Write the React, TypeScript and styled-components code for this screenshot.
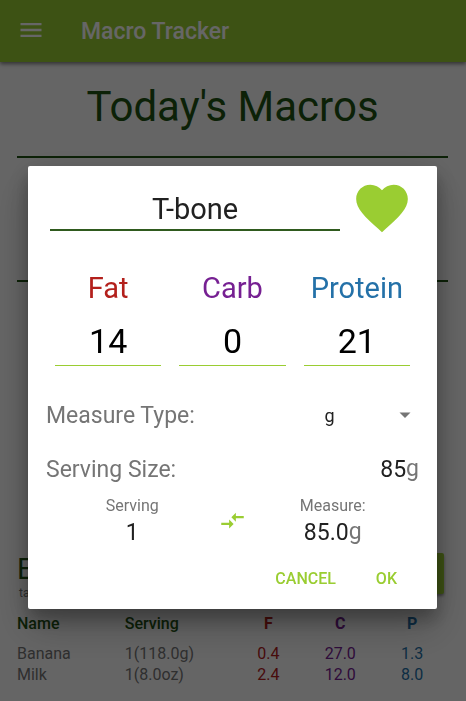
import React from "react";
import styled, { createGlobalStyle } from "styled-components";

const GlobalStyle = createGlobalStyle`
  *, *::before, *::after { box-sizing: border-box; }
  body { margin: 0; background: #fdfdfd; font-family: Roboto, "Liberation Sans", sans-serif; }
  button, input, select { font-family: inherit; }
`;

const GREEN = "#9acd32";
const FOREST = "#1f5413";
const FAT = "#b3201c";
const CARB = "#762092";
const PROTEIN = "#2471a8";

/* ---------- Page behind the dialog ---------- */

const Page = styled.div`
  min-height: 100vh;
  display: flex;
  flex-direction: column;
`;

const AppBar = styled.header`
  display: flex;
  align-items: center;
  gap: 36px;
  height: 62px;
  padding: 0 17px;
  background: ${GREEN};
  box-shadow: 0 2px 4px rgba(0, 0, 0, 0.5);
`;

const MenuButton = styled.button`
  display: flex;
  padding: 0 0 2px;
  border: 0;
  background: none;
  color: #fff;
`;

const AppName = styled.span`
  padding-top: 2px;
  font-size: 23px;
  font-weight: 500;
  line-height: 28px;
  color: #fff;
`;

const Content = styled.main`
  padding: 17px 18px 16px 17px;
`;

const PageTitle = styled.h1`
  margin: 0;
  font-size: 42px;
  font-weight: 400;
  line-height: 56px;
  text-align: center;
  color: ${FOREST};
`;

const Summary = styled.section`
  height: 126px;
  margin-top: 21px;
  border-top: 2px solid ${FOREST};
  border-bottom: 2px solid ${FOREST};
`;

const EntriesHeader = styled.div`
  display: flex;
  justify-content: space-between;
  align-items: flex-start;
  margin-top: 271px;
  padding-right: 4px;
`;

const EntriesTitle = styled.h2`
  margin: 0;
  font-size: 29px;
  font-weight: 400;
  line-height: 32px;
  color: ${FOREST};
`;

const EntriesHint = styled.p`
  margin: 0 2px;
  font-size: 12px;
  line-height: 16px;
  color: #757575;
`;

const AddButton = styled.button`
  width: 96px;
  height: 41px;
  border: 0;
  border-radius: 2px;
  background: ${GREEN};
  box-shadow: 0 2px 3px rgba(0, 0, 0, 0.4);
`;

const EntriesTable = styled.table`
  width: 100%;
  margin-top: 12px;
  table-layout: fixed;
  border-collapse: collapse;
  font-size: 16px;
  line-height: 21px;
  color: #757575;
`;

const HeadCell = styled.th<{ $wide?: boolean; $color?: string }>`
  width: ${(p) => (p.$wide ? "25%" : "auto")};
  padding: 0 0 9px;
  font-weight: ${(p) => (p.$wide ? 500 : 700)};
  text-align: ${(p) => (p.$wide ? "left" : "center")};
  color: ${(p) => p.$color ?? FOREST};
`;

const Cell = styled.td<{ $color?: string }>`
  padding: 0;
  text-align: ${(p) => (p.$color ? "center" : "left")};
  color: ${(p) => p.$color ?? "inherit"};
`;

/* ---------- Dialog ---------- */

const Scrim = styled.div`
  position: fixed;
  inset: 0;
  display: flex;
  align-items: flex-start;
  padding: 166px 29px 0 28px;
  background: rgba(0, 0, 0, 0.6);
`;

const Dialog = styled.form`
  flex: 1;
  min-width: 0;
  padding: 11px 18px 13px;
  border-radius: 2px;
  background: #fff;
  box-shadow:
    0 11px 15px rgba(0, 0, 0, 0.2),
    0 20px 38px rgba(0, 0, 0, 0.2),
    0 6px 30px rgba(0, 0, 0, 0.15);
`;

const NameRow = styled.div`
  display: flex;
  align-items: flex-start;
  gap: 11px;
  padding: 0 6px 0 4px;
`;

const NameInput = styled.input`
  flex: 1;
  min-width: 0;
  height: 54px;
  padding: 12px 0 0;
  border: 0;
  border-bottom: 2px solid #2f5a1e;
  border-radius: 0;
  background: none;
  font-size: 29px;
  text-align: center;
  color: #212121;
  outline: none;
`;

const FavoriteButton = styled.button`
  display: flex;
  padding: 0;
  border: 0;
  background: none;
  color: ${GREEN};
`;

const MacroRow = styled.div`
  display: grid;
  grid-template-columns: repeat(3, 1fr);
  gap: 18px;
  margin-top: 31px;
  padding: 0 9px;
`;

const Macro = styled.label<{ $color: string }>`
  display: flex;
  flex-direction: column;
  align-items: center;
  gap: 11px;
  font-size: 29px;
  line-height: 36px;
  white-space: nowrap;
  color: ${(p) => p.$color};
`;

const MacroInput = styled.input`
  width: 100%;
  height: 49px;
  padding: 0;
  border: 0;
  border-bottom: 1px solid ${GREEN};
  border-radius: 0;
  background: none;
  font-size: 34px;
  text-align: center;
  color: #000;
  outline: none;
`;

const FieldRow = styled.div<{ $gap: number }>`
  display: flex;
  align-items: center;
  justify-content: space-between;
  height: 32px;
  margin-top: ${(p) => p.$gap}px;
  font-size: 23px;
  color: #757575;
`;

const SelectBox = styled.div`
  display: grid;
  flex: 0 0 48%;
  align-items: center;

  > * { grid-area: 1 / 1; }
  > svg { justify-self: end; margin-right: 8px; pointer-events: none; }
`;

const UnitSelect = styled.select`
  appearance: none;
  width: 100%;
  height: 32px;
  padding: 0;
  border: 0;
  background: none;
  font-size: 18px;
  text-align: center;
  text-align-last: center;
  color: #212121;
`;

const Amount = styled.span`
  display: flex;
  align-items: center;
  font-size: 23px;
  line-height: 28px;
  color: #757575;
`;

const AmountInput = styled.input`
  field-sizing: content;
  height: 28px;
  padding: 0;
  border: 0;
  background: none;
  font-size: 23px;
  text-align: center;
  color: #212121;
  outline: none;
`;

const Converter = styled.div`
  display: grid;
  grid-template-columns: 1fr 28px 1fr;
  align-items: center;
  justify-items: center;
  margin-top: 11px;
`;

const ConverterField = styled.label`
  display: flex;
  flex-direction: column;
  align-items: center;
  gap: 2px;
  font-size: 16px;
  line-height: 20px;
  color: #757575;
`;

const SwapButton = styled.button`
  display: flex;
  padding: 0 0 2px;
  border: 0;
  background: none;
  color: ${GREEN};
`;

const Actions = styled.div`
  display: flex;
  justify-content: flex-end;
  gap: 24px;
  margin-top: 14px;
  padding-right: 14px;
`;

const ActionButton = styled.button`
  height: 36px;
  padding: 0 8px;
  border: 0;
  background: none;
  font-size: 16px;
  font-weight: 500;
  color: ${GREEN};
`;

const macros = [
  { label: "Fat", value: "14", color: FAT },
  { label: "Carb", value: "0", color: CARB },
  { label: "Protein", value: "21", color: PROTEIN },
];

const entries = [
  { name: "Banana", serving: "1(118.0g)", fat: "0.4", carb: "27.0", protein: "1.3" },
  { name: "Milk", serving: "1(8.0oz)", fat: "2.4", carb: "12.0", protein: "8.0" },
];

export default function App() {
  return (
    <>
      <GlobalStyle />
      <Page>
        <AppBar>
          <MenuButton type="button" aria-label="Menu">
            <svg width="28" height="28" viewBox="0 0 24 24" fill="currentColor">
              <path d="M3 18h18v-2H3v2zm0-5h18v-2H3v2zm0-7v2h18V6H3z" />
            </svg>
          </MenuButton>
          <AppName>Macro Tracker</AppName>
        </AppBar>
        <Content>
          <PageTitle>Today's Macros</PageTitle>
          <Summary />
          <EntriesHeader>
            <div>
              <EntriesTitle>Eaten</EntriesTitle>
              <EntriesHint>tap to edit</EntriesHint>
            </div>
            <AddButton type="button" aria-label="Add food" />
          </EntriesHeader>
          <EntriesTable>
            <thead>
              <tr>
                <HeadCell $wide>Name</HeadCell>
                <HeadCell $wide>Serving</HeadCell>
                <HeadCell $color={FAT}>F</HeadCell>
                <HeadCell $color={CARB}>C</HeadCell>
                <HeadCell $color={PROTEIN}>P</HeadCell>
              </tr>
            </thead>
            <tbody>
              {entries.map((e) => (
                <tr key={e.name}>
                  <Cell>{e.name}</Cell>
                  <Cell>{e.serving}</Cell>
                  <Cell $color={FAT}>{e.fat}</Cell>
                  <Cell $color={CARB}>{e.carb}</Cell>
                  <Cell $color={PROTEIN}>{e.protein}</Cell>
                </tr>
              ))}
            </tbody>
          </EntriesTable>
        </Content>
      </Page>

      <Scrim>
        <Dialog role="dialog" aria-label="Edit food" onSubmit={(e) => e.preventDefault()}>
          <NameRow>
            <NameInput aria-label="Food name" defaultValue="T-bone" />
            <FavoriteButton type="button" aria-label="Favorite">
              <svg width="62" height="62" viewBox="0 0 24 24" fill="currentColor">
                <path d="M12 21.35l-1.45-1.32C5.4 15.36 2 12.28 2 8.5 2 5.42 4.42 3 7.5 3c1.74 0 3.41.81 4.5 2.09C13.09 3.81 14.76 3 16.5 3 19.58 3 22 5.42 22 8.5c0 3.78-3.4 6.86-8.55 11.54L12 21.35z" />
              </svg>
            </FavoriteButton>
          </NameRow>

          <MacroRow>
            {macros.map((m) => (
              <Macro key={m.label} $color={m.color}>
                {m.label}
                <MacroInput defaultValue={m.value} inputMode="decimal" />
              </Macro>
            ))}
          </MacroRow>

          <FieldRow $gap={33}>
            <label htmlFor="measure-type">Measure Type:</label>
            <SelectBox>
              <UnitSelect id="measure-type" defaultValue="g">
                <option value="g">g</option>
                <option value="oz">oz</option>
              </UnitSelect>
              <svg width="12" height="6" viewBox="0 0 12 6" fill="#757575">
                <path d="M0.5 0.5h11L6 6z" />
              </svg>
            </SelectBox>
          </FieldRow>

          <FieldRow $gap={22}>
            <label htmlFor="serving-size">Serving Size:</label>
            <Amount>
              <AmountInput id="serving-size" defaultValue="85" inputMode="decimal" />g
            </Amount>
          </FieldRow>

          <Converter>
            <ConverterField>
              Serving
              <Amount>
                <AmountInput defaultValue="1" inputMode="decimal" />
              </Amount>
            </ConverterField>
            <SwapButton type="button" aria-label="Convert">
              <svg width="27" height="27" viewBox="0 0 24 24" fill="currentColor">
                <path d="M9.01 14H2v2h7.01v3L13 15l-3.99-4v3zm5.98-1v-3H22V8h-7.01V5L11 9l3.99 4z" />
              </svg>
            </SwapButton>
            <ConverterField>
              Measure:
              <Amount>
                <AmountInput defaultValue="85.0" inputMode="decimal" />g
              </Amount>
            </ConverterField>
          </Converter>

          <Actions>
            <ActionButton type="button">CANCEL</ActionButton>
            <ActionButton type="submit">OK</ActionButton>
          </Actions>
        </Dialog>
      </Scrim>
    </>
  );
}
